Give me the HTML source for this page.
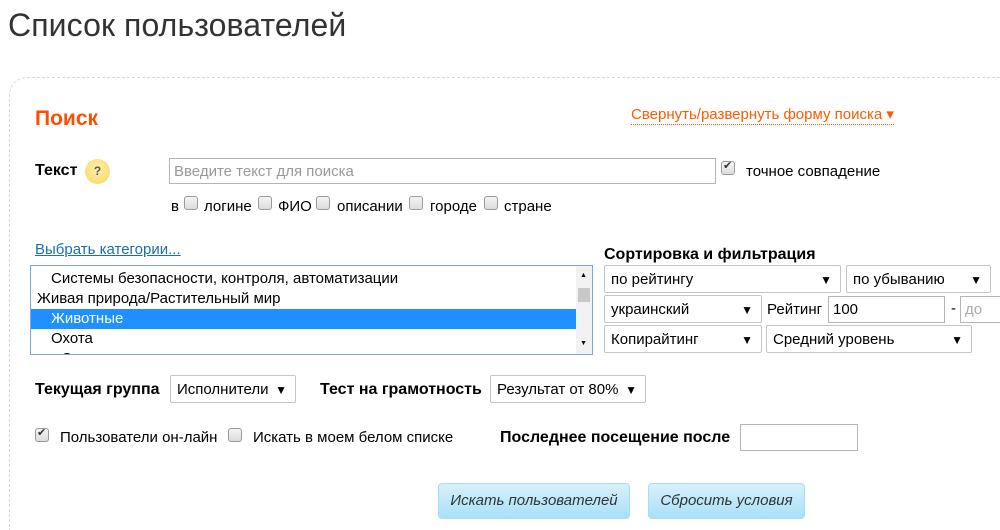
<!DOCTYPE html>
<html><head><meta charset="utf-8"><style>
*{box-sizing:border-box;margin:0;padding:0}
html,body{width:1000px;height:530px;overflow:hidden}
body{background:#fff;font-family:"Liberation Sans","DejaVu Sans",sans-serif;color:#000;position:relative;font-size:15px}
.a{position:absolute;white-space:nowrap}
.box{position:absolute;left:9px;top:77px;width:991px;height:453px;border:1px dashed #d8d8d8;border-right:none;border-bottom:none;border-radius:18px 0 0 0}
.inp{position:absolute;border:1px solid #b5b5b5;background:#fff;font-size:15px;padding:2px 4px;line-height:22px;height:26px}
.sel{position:absolute;border:1px solid #c5c5c5;background:#fff;font-size:15px;padding:1px 6px 0;line-height:26px;height:28px;border-radius:2px}
.sel:after{content:"▼";position:absolute;right:8px;top:1px;font-size:12px}
.cb{position:absolute;width:14px;height:14px;border:1px solid #9a9a9a;border-radius:3px;background:linear-gradient(#f4f4f4,#dcdcdc)}
.cb.on:after{content:"✔";position:absolute;left:1px;top:-3px;font-size:11px;color:#333}
b{font-weight:bold;font-size:16px}
.btn{position:absolute;height:36px;border:1px solid #a9dcf2;border-radius:4px;background:linear-gradient(#d6f1fd,#a8e0f8);font-style:italic;font-size:15px;color:#333;text-align:center;line-height:34px}
</style></head><body>
<div class="a" style="left:8px;top:7px;font-size:32px;color:#333;letter-spacing:0.1px">Список пользователей</div>
<div class="box"></div>
<div class="a" style="left:35px;top:107px;font-size:21px;font-weight:bold;color:#ff4e00">Поиск</div>
<div class="a" style="left:631px;top:106px;font-size:15px;color:#ff5a00;border-bottom:1px dotted #ff5a00;line-height:18px">Свернуть/развернуть форму поиска ▾</div>
<div class="a" style="left:35px;top:162px"><b>Текст</b></div>
<div class="a" style="left:85px;top:159px;width:25px;height:25px;border-radius:50%;background:radial-gradient(circle at 50% 40%,#fff0a8,#f9d560);font-size:12px;font-weight:bold;text-align:center;line-height:25px;color:#555">?</div>
<div class="inp" style="left:169px;top:158px;width:547px;color:#999">Введите текст для поиска</div>
<div class="cb on" style="left:721px;top:161px"></div>
<div class="a" style="left:746px;top:163px">точное совпадение</div>
<div class="a" style="left:171px;top:198px">в</div>
<div class="cb" style="left:184px;top:196px"></div><div class="a" style="left:204px;top:198px">логине</div>
<div class="cb" style="left:258px;top:196px"></div><div class="a" style="left:278px;top:198px">ФИО</div>
<div class="cb" style="left:316px;top:196px"></div><div class="a" style="left:337px;top:198px">описании</div>
<div class="cb" style="left:409px;top:196px"></div><div class="a" style="left:430px;top:198px">городе</div>
<div class="cb" style="left:484px;top:196px"></div><div class="a" style="left:504px;top:198px">стране</div>
<div class="a" style="left:35px;top:241px;color:#1a6fb0;text-decoration:underline">Выбрать категории...</div>
<div class="a" style="left:30px;top:265px;width:563px;height:90px;border:1px solid #7aa7d8;overflow:hidden;font-size:15px;line-height:20px;padding-top:3px">
<div style="padding-left:20px">Системы безопасности, контроля, автоматизации</div>
<div style="padding-left:6px">Живая природа/Растительный мир</div>
<div style="padding-left:20px;background:#1e90ff;color:#fff;margin-right:16px">Животные</div>
<div style="padding-left:20px">Охота</div>
<div style="padding-left:30px">С</div>
<div style="position:absolute;right:0;top:0;width:16px;height:88px;background:#f2f2f2"><div style="position:absolute;top:0;left:4px;font-size:7px">▲</div><div style="position:absolute;top:22px;left:2px;width:12px;height:14px;background:#c8c8c8"></div><div style="position:absolute;bottom:0;left:4px;font-size:7px">▼</div></div>
</div>
<div class="a" style="left:604px;top:246px"><b>Сортировка и фильтрация</b></div>
<div class="sel" style="left:604px;top:265px;width:237px">по рейтингу</div>
<div class="sel" style="left:846px;top:265px;width:145px">по убыванию</div>
<div class="sel" style="left:604px;top:295px;width:158px">украинский</div>
<div class="a" style="left:767px;top:301px">Рейтинг</div>
<div class="inp" style="left:828px;top:296px;width:117px;height:27px">100</div>
<div class="a" style="left:951px;top:300px">-</div>
<div class="inp" style="left:960px;top:296px;width:50px;height:27px;color:#aaa">до</div>
<div class="sel" style="left:604px;top:325px;width:158px">Копирайтинг</div>
<div class="sel" style="left:766px;top:325px;width:206px">Средний уровень</div>
<div class="a" style="left:35px;top:381px"><b>Текущая группа</b></div>
<div class="sel" style="left:170px;top:375px;width:126px;padding-right:20px">Исполнители</div>
<div class="a" style="left:320px;top:381px"><b>Тест на грамотность</b></div>
<div class="sel" style="left:490px;top:375px;width:156px">Результат от 80%</div>
<div class="cb on" style="left:35px;top:428px"></div>
<div class="a" style="left:60px;top:429px">Пользователи он-лайн</div>
<div class="cb" style="left:228px;top:428px"></div>
<div class="a" style="left:253px;top:429px">Искать в моем белом списке</div>
<div class="a" style="left:500px;top:429px"><b>Последнее посещение после</b></div>
<div class="inp" style="left:740px;top:424px;width:118px;height:27px"></div>
<div class="btn" style="left:438px;top:483px;width:192px">Искать пользователей</div>
<div class="btn" style="left:648px;top:483px;width:157px">Сбросить условия</div>
</body></html>
